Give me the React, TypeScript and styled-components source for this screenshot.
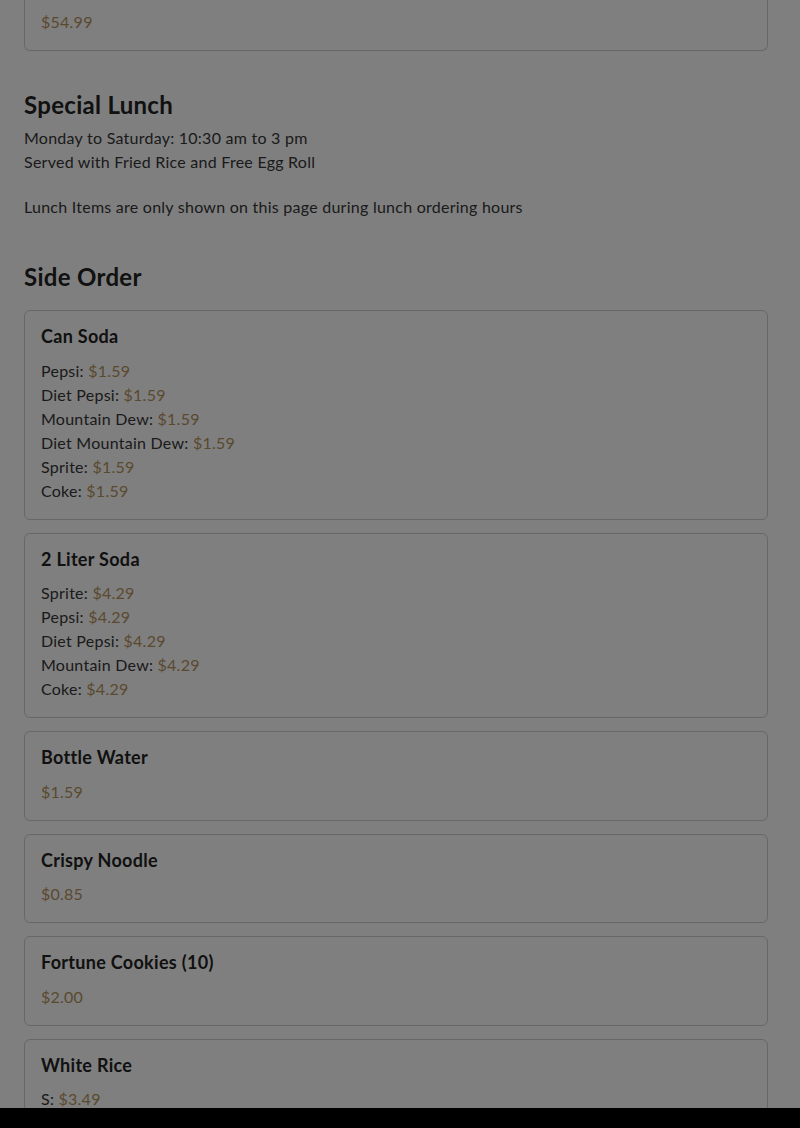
import React from "react";
import styled, { createGlobalStyle } from "styled-components";

const Global = createGlobalStyle`
  html, body { margin: 0; padding: 0; background: #000; }
  body { font-family: "Lato", "Open Sans", sans-serif; color: #363636; }
  * { box-sizing: border-box; }
`;

const Page = styled.div`
  height: 1108px;
  overflow: hidden;
  background: #fff;
  padding: 0 32px 0 24px;
`;

const Section = styled.section<{ $top: number }>`
  margin-top: ${(p) => p.$top}px;
`;

const Heading = styled.h2<{ $gap: number }>`
  margin: 0 0 ${(p) => p.$gap}px;
  font-size: 24px;
  line-height: 30px;
  font-weight: 700;
  letter-spacing: 0.3px;
  color: #222;
`;

const Para = styled.p<{ $top?: number }>`
  margin: ${(p) => p.$top ?? 0}px 0 0;
  font-size: 16px;
  line-height: 24px;
  letter-spacing: 0.25px;
`;

const CardList = styled.div`
  display: flex;
  flex-direction: column;
  gap: 13px;
`;

const Card = styled.div<{ $continued?: boolean }>`
  border: 1px solid #cfcfcf;
  border-radius: 6px;
  padding: 16px;
  ${(p) =>
    p.$continued &&
    `border-top: none; border-top-left-radius: 0; border-top-right-radius: 0; padding-top: 10px;`}
`;

const CardTitle = styled.h3`
  margin: 0 0 13.5px;
  font-size: 18px;
  line-height: 18px;
  font-weight: 700;
  letter-spacing: 0.3px;
  color: #222;
`;

const Line = styled.div`
  font-size: 16px;
  line-height: 24px;
  letter-spacing: 0.25px;
`;

const Price = styled.span`
  color: #b5935d;
`;

const Overlay = styled.div`
  position: fixed;
  inset: 0;
  background: rgba(0, 0, 0, 0.5);
`;

type Item = { title: string; lines: [string | null, string][] };

const items: Item[] = [
  {
    title: "Can Soda",
    lines: [
      ["Pepsi", "$1.59"],
      ["Diet Pepsi", "$1.59"],
      ["Mountain Dew", "$1.59"],
      ["Diet Mountain Dew", "$1.59"],
      ["Sprite", "$1.59"],
      ["Coke", "$1.59"],
    ],
  },
  {
    title: "2 Liter Soda",
    lines: [
      ["Sprite", "$4.29"],
      ["Pepsi", "$4.29"],
      ["Diet Pepsi", "$4.29"],
      ["Mountain Dew", "$4.29"],
      ["Coke", "$4.29"],
    ],
  },
  { title: "Bottle Water", lines: [[null, "$1.59"]] },
  { title: "Crispy Noodle", lines: [[null, "$0.85"]] },
  { title: "Fortune Cookies (10)", lines: [[null, "$2.00"]] },
  {
    title: "White Rice",
    lines: [
      ["S", "$3.49"],
      ["L", "$5.49"],
    ],
  },
];

export default function App() {
  return (
    <>
      <Global />
      <Page>
        <Card $continued>
          <Line>
            <Price>$54.99</Price>
          </Line>
        </Card>

        <Section $top={39}>
          <Heading $gap={6}>Special Lunch</Heading>
          <Para>
            Monday to Saturday: 10:30 am to 3 pm
            <br />
            Served with Fried Rice and Free Egg Roll
          </Para>
          <Para $top={21}>
            Lunch Items are only shown on this page during lunch ordering hours
          </Para>
        </Section>

        <Section $top={43}>
          <Heading $gap={18}>Side Order</Heading>
          <CardList>
            {items.map((it) => (
              <Card key={it.title}>
                <CardTitle>{it.title}</CardTitle>
                {it.lines.map(([label, price], i) => (
                  <Line key={i}>
                    {label ? `${label}: ` : ""}
                    <Price>{price}</Price>
                  </Line>
                ))}
              </Card>
            ))}
          </CardList>
        </Section>
      </Page>
      <Overlay />
    </>
  );
}
